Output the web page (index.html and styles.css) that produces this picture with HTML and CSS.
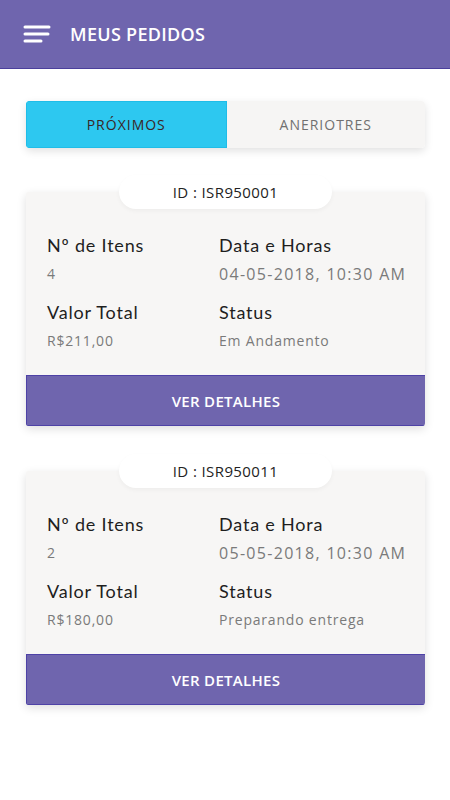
FILE: index.html
```html
<!DOCTYPE html>
<html lang="pt">
<head>
    <meta charset="UTF-8">
    <meta name="viewport" content="width=device-width, initial-scale=1.0">
    <title>Meus Pedidos</title>
    <link rel="stylesheet" href="styles.css">
</head>
<body>
    <header class="topbar">
        <svg class="menu-icon" width="28" height="20" viewBox="0 0 28 20">
            <line x1="2" y1="3" x2="26" y2="3" />
            <line x1="2" y1="10" x2="25" y2="10" />
            <line x1="2" y1="17" x2="18" y2="17" />
        </svg>
        <h1>MEUS PEDIDOS</h1>
    </header>

    <main class="content">
        <div class="tabs">
            <div class="tab active">PRÓXIMOS</div>
            <div class="tab">ANERIOTRES</div>
        </div>

        <div class="order">
            <div class="order-id">ID : ISR950001</div>
            <div class="card">
                <div class="info">
                    <div class="field">
                        <div class="label">Nº de Itens</div>
                        <div class="value">4</div>
                    </div>
                    <div class="field">
                        <div class="label">Data e Horas</div>
                        <div class="value date">04-05-2018, 10:30 AM</div>
                    </div>
                    <div class="field">
                        <div class="label">Valor Total</div>
                        <div class="value">R$211,00</div>
                    </div>
                    <div class="field">
                        <div class="label">Status</div>
                        <div class="value">Em Andamento</div>
                    </div>
                </div>
                <button class="details">VER DETALHES</button>
            </div>
        </div>

        <div class="order">
            <div class="order-id">ID : ISR950011</div>
            <div class="card">
                <div class="info">
                    <div class="field">
                        <div class="label">Nº de Itens</div>
                        <div class="value">2</div>
                    </div>
                    <div class="field">
                        <div class="label">Data e Hora</div>
                        <div class="value date">05-05-2018, 10:30 AM</div>
                    </div>
                    <div class="field">
                        <div class="label">Valor Total</div>
                        <div class="value">R$180,00</div>
                    </div>
                    <div class="field">
                        <div class="label">Status</div>
                        <div class="value">Preparando entrega</div>
                    </div>
                </div>
                <button class="details">VER DETALHES</button>
            </div>
        </div>
    </main>
</body>
</html>
```

FILE: styles.css
```css
body {
    margin: 0;
    padding: 0;
    background-color: #fff;
    font-family: 'Open Sans', sans-serif;
    color: #222;
}
.topbar {
    height: 69px;
    background-color: #6f65ae;
    border-bottom: 1px solid #4b3f9c;
    display: flex;
    align-items: center;
    padding-left: 23px;
    box-sizing: border-box;
}
.menu-icon {
    margin-right: 19px;
    margin-top: -1px;
}
.menu-icon line {
    stroke: #fff;
    stroke-width: 3;
    stroke-linecap: round;
}
.topbar h1 {
    margin: 0;
    color: #fff;
    font-size: 18px;
    font-weight: 600;
    letter-spacing: 0.3px;
}
.content {
    padding: 32px 25px 40px 26px;
}
.tabs {
    display: flex;
    height: 47px;
    border-radius: 4px;
    overflow: hidden;
    box-shadow: 0 3px 8px rgba(0, 0, 0, 0.12);
    margin-bottom: 27px;
}
.tab {
    flex: 1;
    display: flex;
    align-items: center;
    justify-content: center;
    font-size: 14px;
    letter-spacing: 1px;
    background-color: #f6f5f4;
    color: #707070;
}
.tab.active {
    background-color: #2dc8f0;
    color: #3b2626;
    border: 1px solid #1fbde8;
}
.order {
    display: flex;
    flex-direction: column;
    align-items: center;
    margin-bottom: 28px;
}
.order-id {
    position: relative;
    z-index: 1;
    width: 213px;
    height: 34px;
    line-height: 34px;
    background-color: #fff;
    border-radius: 17px;
    text-align: center;
    font-size: 15px;
    color: #222;
    letter-spacing: 0.4px;
    margin-bottom: -17px;
    box-shadow: 0 2px 4px rgba(0, 0, 0, 0.04);
}
.card {
    width: 100%;
    background-color: #f7f6f5;
    border-radius: 3px;
    box-shadow: 0 3px 10px rgba(0, 0, 0, 0.13);
    overflow: hidden;
}
.info {
    display: grid;
    grid-template-columns: 172px 1fr;
    row-gap: 15px;
    padding: 41px 10px 23px 21px;
}
.label {
    font-family: 'Lato', sans-serif;
    font-size: 18px;
    color: #1e1e1e;
    letter-spacing: 0.8px;
    line-height: 24px;
}
.value {
    font-size: 14px;
    color: #7a7a7a;
    letter-spacing: 0.8px;
    margin-top: 6px;
    line-height: 22px;
}
.value.date {
    font-size: 16px;
    letter-spacing: 1.3px;
}
.details {
    display: block;
    width: 100%;
    height: 51px;
    border: 1px solid #4e42a6;
    border-right: none;
    background-color: #6f65ae;
    color: #fff;
    font-family: 'Open Sans', sans-serif;
    font-size: 15px;
    font-weight: 600;
    letter-spacing: 0.3px;
    cursor: pointer;
}
```
